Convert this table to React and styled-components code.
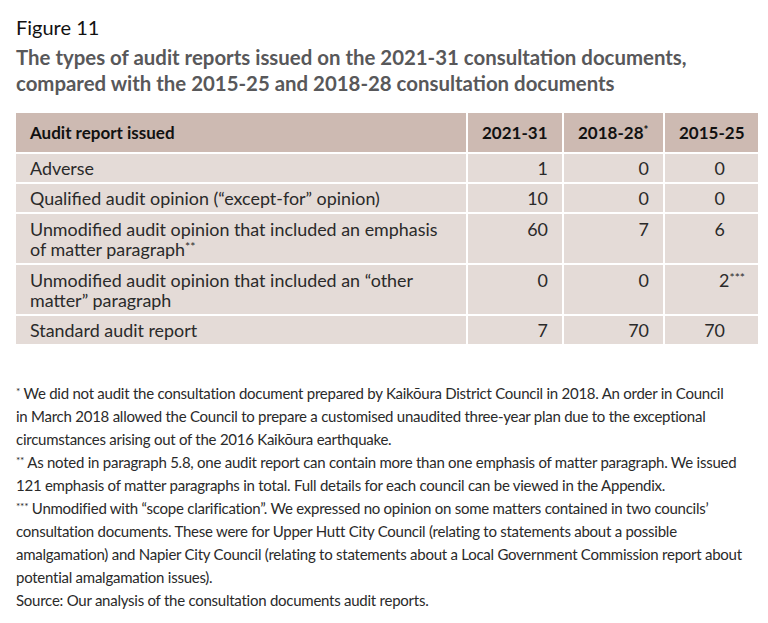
import React from 'react';
import styled, { createGlobalStyle } from 'styled-components';

const GlobalStyle = createGlobalStyle`
    html, body {
        margin: 0;
        padding: 0;
        background: #ffffff;
    }
    body {
        font-family: Lato, "Open Sans", sans-serif;
        color: #1a1a1a;
    }
`;

const Page = styled.div`
    padding: 16px 10px 20px 16px;
`;

const FigureLabel = styled.div`
    font-size: 20px;
    line-height: 23px;
    color: #111111;
`;

const Title = styled.h1`
    margin: 5px 0 0 0;
    font-size: 20.4px;
    line-height: 26px;
    font-weight: 700;
    color: #58585a;
    white-space: nowrap;
`;

const Table = styled.div`
    display: grid;
    grid-template-columns: 450px 94px 99px 93px;
    column-gap: 2px;
    row-gap: 2px;
    margin-top: 17px;
    width: 742px;
`;

const HeadCell = styled.div`
    background: #cdbab2;
    font-size: 17px;
    font-weight: 700;
    line-height: 20px;
    color: #111111;
    padding: 10px 15px 9px 14px;
    text-align: ${p => (p.$num ? 'right' : 'left')};
    white-space: nowrap;
`;

const Cell = styled.div`
    background: #e4dbd7;
    font-size: 17.9px;
    line-height: 20px;
    color: #2a2a2a;
    padding: ${p => (p.$tall ? '5px' : '4px')} ${p => (p.$wide ? '13px' : p.$last ? '33px' : '14px')} 4px 14px;
    text-align: ${p => (p.$num ? 'right' : 'left')};
    white-space: nowrap;
`;

const Sup = styled.span`
    font-size: 0.68em;
    position: relative;
    top: -0.42em;
    line-height: 0;
`;

const Notes = styled.div`
    margin-top: 38px;
    font-size: 15px;
    letter-spacing: -0.25px;
    line-height: 23px;
    color: #2a2a2a;
`;

const Note = styled.p`
    margin: 0;
    white-space: nowrap;
`;

const ROWS = [
    { label: 'Adverse', values: ['1', '0', '0'] },
    { label: 'Qualified audit opinion (\u201cexcept-for\u201d opinion)', values: ['10', '0', '0'] },
    {
        label: (
            <>
                Unmodified audit opinion that included an emphasis
                <br />
                of matter paragraph<Sup>**</Sup>
            </>
        ),
        values: ['60', '7', '6'],
        tall: true,
    },
    {
        label: (
            <>
                Unmodified audit opinion that included an {'\u201c'}other
                <br />
                matter{'\u201d'} paragraph
            </>
        ),
        values: ['0', '0', <>2<Sup>***</Sup></>],
        tall: true,
        wide: true,
    },
    { label: 'Standard audit report', values: ['7', '70', '70'] },
];

export default function App() {
    return (
        <Page>
            <GlobalStyle />
            <FigureLabel>Figure 11</FigureLabel>
            <Title>
                The types of audit reports issued on the 2021-31 consultation documents,
                <br />
                compared with the 2015-25 and 2018-28 consultation documents
            </Title>

            <Table>
                <HeadCell>Audit report issued</HeadCell>
                <HeadCell $num>2021-31</HeadCell>
                <HeadCell $num>2018-28<Sup>*</Sup></HeadCell>
                <HeadCell $num>2015-25</HeadCell>

                {ROWS.map((row, i) => (
                    <React.Fragment key={i}>
                        <Cell $tall={row.tall}>{row.label}</Cell>
                        <Cell $num $tall={row.tall}>{row.values[0]}</Cell>
                        <Cell $num $tall={row.tall}>{row.values[1]}</Cell>
                        <Cell $num $last $tall={row.tall} $wide={row.wide}>{row.values[2]}</Cell>
                    </React.Fragment>
                ))}
            </Table>

            <Notes>
                <Note>
                    <Sup>*</Sup> We did not audit the consultation document prepared by Kaikōura District Council in 2018. An order in Council
                    <br />
                    in March 2018 allowed the Council to prepare a customised unaudited three-year plan due to the exceptional
                    <br />
                    circumstances arising out of the 2016 Kaikōura earthquake.
                </Note>
                <Note>
                    <Sup>**</Sup> As noted in paragraph 5.8, one audit report can contain more than one emphasis of matter paragraph. We issued
                    <br />
                    121 emphasis of matter paragraphs in total. Full details for each council can be viewed in the Appendix.
                </Note>
                <Note>
                    <Sup>***</Sup> Unmodified with {'\u201c'}scope clarification{'\u201d'}. We expressed no opinion on some matters contained in two councils{'\u2019'}
                    <br />
                    consultation documents. These were for Upper Hutt City Council (relating to statements about a possible
                    <br />
                    amalgamation) and Napier City Council (relating to statements about a Local Government Commission report about
                    <br />
                    potential amalgamation issues).
                </Note>
                <Note>Source: Our analysis of the consultation documents audit reports.</Note>
            </Notes>
        </Page>
    );
}
